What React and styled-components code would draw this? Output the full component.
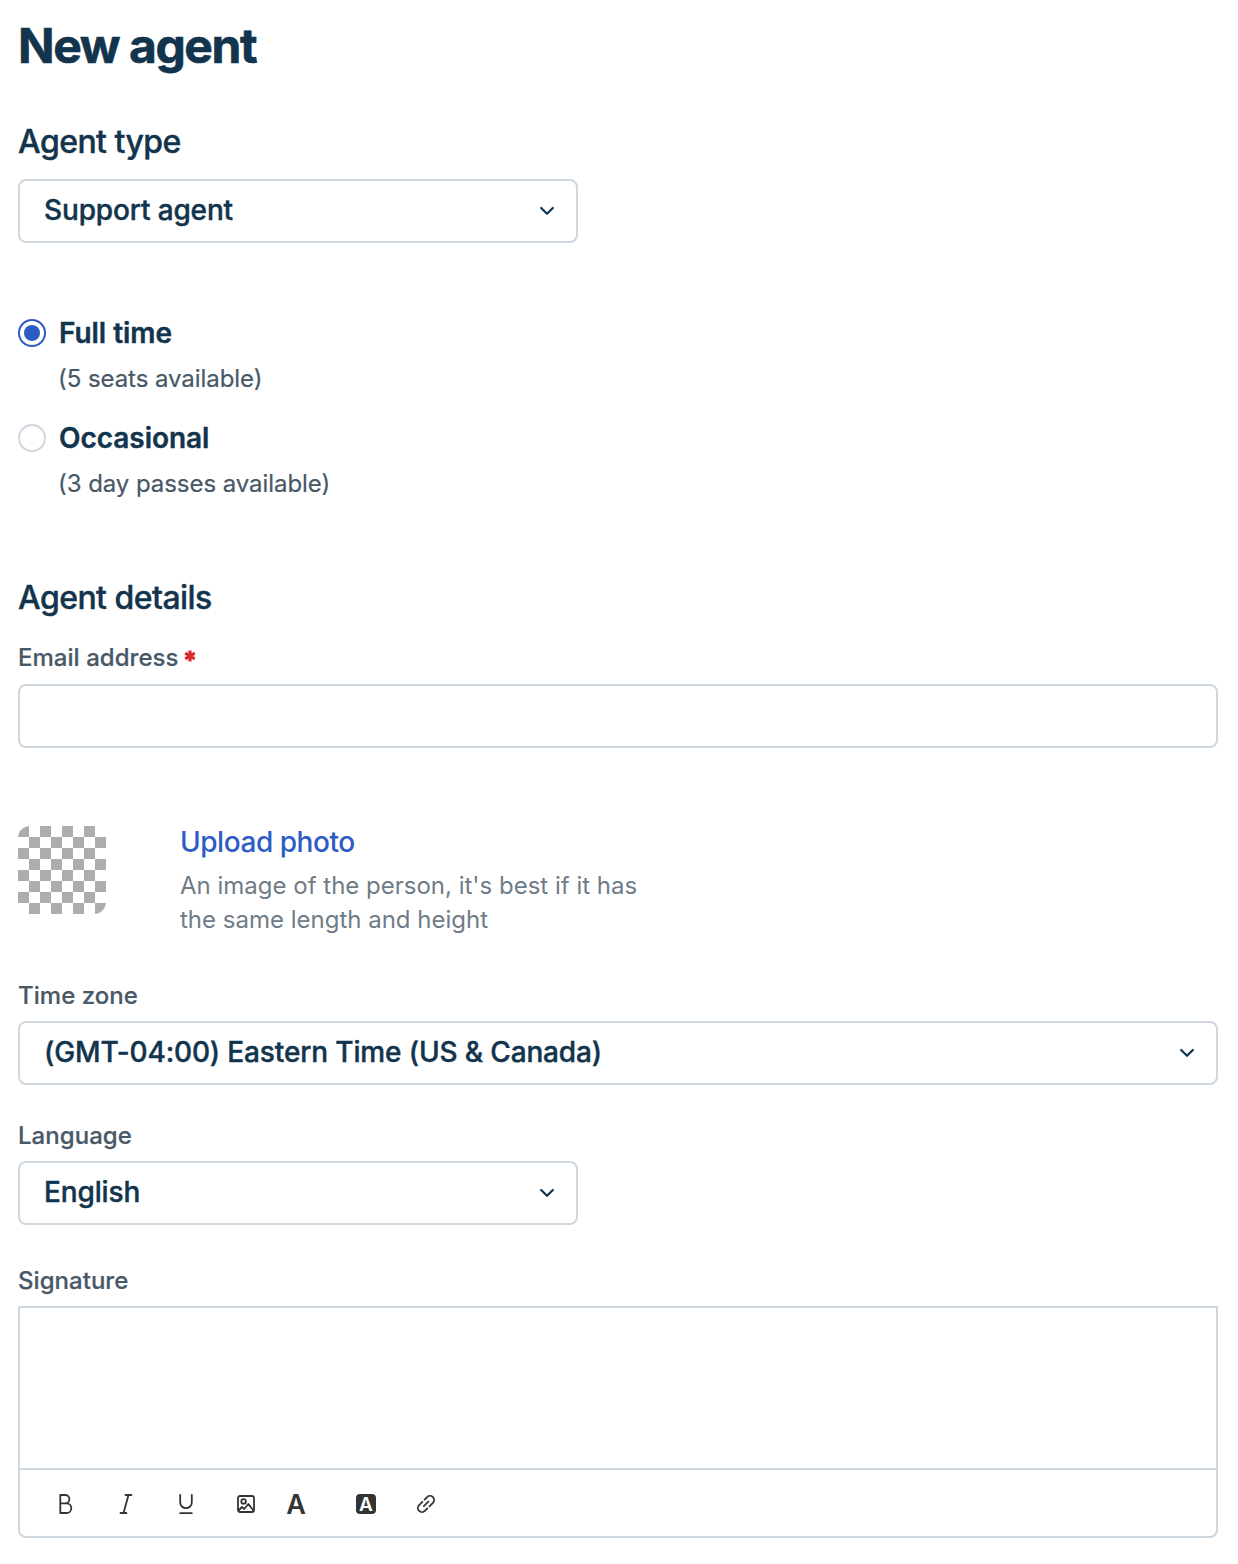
import styled, { createGlobalStyle } from "styled-components";

const GlobalStyle = createGlobalStyle`
  :root {
    --text-color: #12344d;
    --label-color: #475867;
    --hint-color: #6f7c87;
    --link-color: #2c5cc5;
    --border-color: #cfd7df;
    --icon-color: #333333;
    --error-color: #d72d30;
    --font-primary: "Inter", "Liberation Sans", sans-serif;
  }

  * {
    box-sizing: border-box;
  }

  body {
    margin: 0;
    background-color: #ffffff;
    color: var(--text-color);
    font-family: var(--font-primary);
  }
`;

const Page = styled.form`
  display: flex;
  flex-direction: column;
  width: 1238px;
  height: 1564px;
  padding: 18px 20px 0 18px;
  overflow: hidden;
`;

const Title = styled.h1`
  margin: 0;
  font-size: 48px;
  font-weight: 700;
  letter-spacing: -1.42px;
  line-height: 56px;
  -webkit-text-stroke: 0.6px currentColor;
`;

const SectionTitle = styled.h2`
  margin: ${({ $top }) => $top}px 0 0;
  font-size: 32px;
  font-weight: 500;
  letter-spacing: -0.55px;
  line-height: 40px;
  -webkit-text-stroke: 0.4px currentColor;
`;

const Label = styled.label`
  display: flex;
  margin: ${({ $top }) => $top}px 0 10px;
  color: var(--label-color);
  font-size: 24px;
  font-weight: 500;
  letter-spacing: 0.04px;
  line-height: 30px;
  -webkit-text-stroke: 0.2px currentColor;
`;

const Required = styled.svg`
  width: 12px;
  height: 12px;
  margin: 7px 0 0 5px;
  stroke: var(--error-color);
  stroke-width: 3.2;
`;

const SelectBox = styled.div`
  display: flex;
  align-items: center;
  justify-content: space-between;
  width: ${({ $full }) => ($full ? "1200px" : "560px")};
  height: 64px;
  margin-top: ${({ $top }) => $top || 0}px;
  padding: 0 22px 0 24px;
  border: 2px solid var(--border-color);
  border-radius: 8px;
  font-size: 28px;
  font-weight: 500;
  letter-spacing: -0.14px;
  line-height: 36px;
  -webkit-text-stroke: 0.4px currentColor;
`;

const SelectValue = styled.span`
  padding-bottom: 2px;
`;

const Chevron = styled.svg`
  width: 14px;
  height: 10px;
  fill: none;
  stroke: var(--text-color);
  stroke-width: 2.2;
  stroke-linecap: round;
  stroke-linejoin: round;
`;

const TextInput = styled.input`
  width: 1200px;
  height: 64px;
  margin: 1px 0 0;
  padding: 0 24px;
  border: 2px solid var(--border-color);
  border-radius: 8px;
  background-color: #ffffff;
  font: 500 28px var(--font-primary);
`;

const RadioGroup = styled.div`
  display: flex;
  flex-direction: column;
  gap: 24px;
  margin-top: 72px;
`;

const RadioOption = styled.div`
  display: grid;
  grid-template-columns: 28px auto;
  column-gap: 13px;
  row-gap: 11px;
  align-items: center;
`;

const RadioCircle = styled.span`
  display: flex;
  align-items: center;
  justify-content: center;
  width: 28px;
  height: 28px;
  border: 2px solid
    ${({ $checked }) => ($checked ? "var(--link-color)" : "var(--border-color)")};
  border-radius: 50%;

  &::after {
    content: "";
    width: 16px;
    height: 16px;
    border-radius: 50%;
    background-color: ${({ $checked }) =>
      $checked ? "var(--link-color)" : "transparent"};
  }
`;

const RadioLabel = styled.span`
  font-size: 28px;
  font-weight: 600;
  letter-spacing: -0.04px;
  line-height: 36px;
  -webkit-text-stroke: 0.4px currentColor;
`;

const RadioHint = styled.span`
  grid-column: 2;
  margin-left: -1px;
  color: var(--label-color);
  font-size: 24px;
  letter-spacing: -0.06px;
  line-height: 34px;
  -webkit-text-stroke: 0.2px currentColor;
`;

const PhotoRow = styled.div`
  display: flex;
  gap: 74px;
  margin-top: 76px;
`;

const PhotoPreview = styled.div`
  width: 88px;
  height: 88px;
  margin-top: 2px;
  border-radius: 12px;
  background: repeating-conic-gradient(#adadad 0 25%, #ffffff 0 50%) 11px 0 /
    22px 22px;
`;

const PhotoText = styled.div`
  display: flex;
  flex-direction: column;
  gap: 9px;
`;

const UploadLink = styled.a`
  color: var(--link-color);
  font-size: 28px;
  font-weight: 500;
  letter-spacing: -0.46px;
  line-height: 36px;
`;

const PhotoHint = styled.p`
  margin: 0;
  color: var(--hint-color);
  font-size: 24px;
  line-height: 34px;
`;

const Editor = styled.div`
  display: flex;
  flex-direction: column;
  width: 1200px;
  height: 232px;
  border: 2px solid var(--border-color);
  border-radius: 0 0 8px 8px;
`;

const EditorArea = styled.div`
  flex: 1;
`;

const Toolbar = styled.div`
  display: flex;
  align-items: center;
  height: 68px;
  padding: 2px 0 0 34px;
  border-top: 2px solid var(--border-color);
`;

const ToolButton = styled.span`
  display: flex;
  align-items: center;
  justify-content: center;
  width: 24px;
  height: 24px;
  margin-right: ${({ $gap }) => $gap || 36}px;
  color: var(--icon-color);

  svg {
    width: 24px;
    height: 24px;
    fill: none;
    stroke: currentColor;
    stroke-width: 1.8;
    stroke-linecap: round;
    stroke-linejoin: round;
  }
`;

const TextColor = styled.span`
  padding-top: 1px;
  font-size: 27px;
  font-weight: 600;
  line-height: 24px;
`;

const TextBackground = styled.span`
  display: flex;
  align-items: center;
  justify-content: center;
  width: 20px;
  height: 20px;
  padding-top: 1px;
  border-radius: 4px;
  background-color: var(--icon-color);
  color: #ffffff;
  font-size: 19px;
  font-weight: 600;
  line-height: 20px;
`;

const Select = ({ value, full, top }) => (
  <SelectBox $full={full} $top={top}>
    <SelectValue>{value}</SelectValue>
    <Chevron viewBox="0 0 14 10">
      <path d="M1.2 2 7 7.8 12.8 2" />
    </Chevron>
  </SelectBox>
);

const Radio = ({ label, hint, checked }) => (
  <RadioOption>
    <RadioCircle $checked={checked} />
    <RadioLabel>{label}</RadioLabel>
    <RadioHint>{hint}</RadioHint>
  </RadioOption>
);

const App = () => {
  return (
    <>
      <GlobalStyle />
      <Page>
        <Title>New agent</Title>

        <SectionTitle $top={48}>Agent type</SectionTitle>
        <Select value="Support agent" top={17} />
        <RadioGroup>
          <Radio label="Full time" hint="(5 seats available)" checked />
          <Radio label="Occasional" hint="(3 day passes available)" />
        </RadioGroup>

        <SectionTitle $top={77}>Agent details</SectionTitle>
        <Label $top={25}>
          Email address
          <Required viewBox="0 0 12 12">
            <path d="M6 .5v11M1.2 3.2l9.6 5.6M10.8 3.2 1.2 8.8" />
          </Required>
        </Label>
        <TextInput type="email" />

        <PhotoRow>
          <PhotoPreview />
          <PhotoText>
            <UploadLink>Upload photo</UploadLink>
            <PhotoHint>
              An image of the person, it's best if it has
              <br />
              the same length and height
            </PhotoHint>
          </PhotoText>
        </PhotoRow>

        <Label $top={44}>Time zone</Label>
        <Select value="(GMT-04:00) Eastern Time (US & Canada)" full />

        <Label $top={36}>Language</Label>
        <Select value="English" />

        <Label $top={41}>Signature</Label>
        <Editor>
          <EditorArea />
          <Toolbar>
            <ToolButton>
              <svg viewBox="0 0 24 24">
                <path d="M6.3 3h4.9a4.2 4.2 0 0 1 0 8.4H6.3zM6.3 11.4h6.2a4.8 4.8 0 0 1 0 9.6H6.3z" />
              </svg>
            </ToolButton>
            <ToolButton>
              <svg viewBox="0 0 24 24">
                <path d="M11.5 3H17.4M6.5 21H12.4M14.5 3 9.5 21" />
              </svg>
            </ToolButton>
            <ToolButton>
              <svg viewBox="0 0 24 24">
                <path d="M6.2 2.8v7.6a5.8 5.8 0 0 0 11.6 0V2.8M6.2 21.2h11.6" />
              </svg>
            </ToolButton>
            <ToolButton $gap={26}>
              <svg viewBox="0 0 24 24">
                <rect x="4" y="4" width="16" height="16" rx="2" />
                <circle cx="9.6" cy="9.4" r="2.3" />
                <path d="m5 18 3-3 2.2 2 4.2-5 4.8 6.3" />
              </svg>
            </ToolButton>
            <ToolButton $gap={46}>
              <TextColor>A</TextColor>
            </ToolButton>
            <ToolButton>
              <TextBackground>A</TextBackground>
            </ToolButton>
            <ToolButton>
              <svg viewBox="0 0 24 24">
                <path d="M9.8 14.2l4.6-4.6M10.6 7.6l2.5-2.5a4.1 4.1 0 0 1 5.8 5.8l-3.4 3.4M8.4 9.8l-3.3 3.3a4.1 4.1 0 0 0 5.8 5.8l2.5-2.5" />
              </svg>
            </ToolButton>
          </Toolbar>
        </Editor>
      </Page>
    </>
  );
};

export default App;
